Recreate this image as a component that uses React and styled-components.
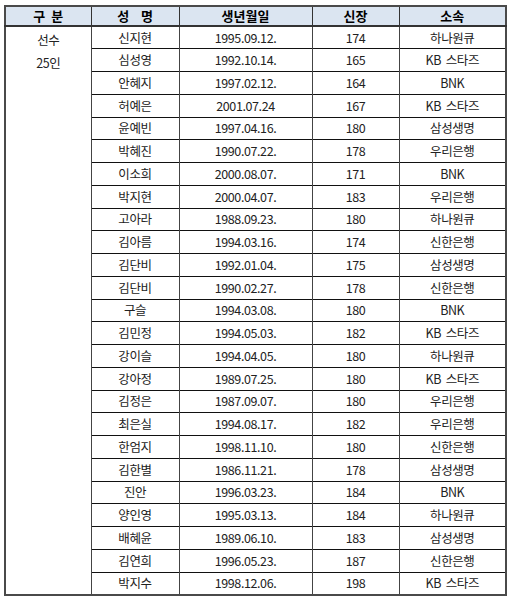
import React from 'react'
import styled, { createGlobalStyle } from 'styled-components'

const players = [
    ['신지현', '1995.09.12.', '174', '하나원큐'],
    ['심성영', '1992.10.14.', '165', 'KB 스타즈'],
    ['안혜지', '1997.02.12.', '164', 'BNK'],
    ['허예은', '2001.07.24', '167', 'KB 스타즈'],
    ['윤예빈', '1997.04.16.', '180', '삼성생명'],
    ['박혜진', '1990.07.22.', '178', '우리은행'],
    ['이소희', '2000.08.07.', '171', 'BNK'],
    ['박지현', '2000.04.07.', '183', '우리은행'],
    ['고아라', '1988.09.23.', '180', '하나원큐'],
    ['김아름', '1994.03.16.', '174', '신한은행'],
    ['김단비', '1992.01.04.', '175', '삼성생명'],
    ['김단비', '1990.02.27.', '178', '신한은행'],
    ['구슬', '1994.03.08.', '180', 'BNK'],
    ['김민정', '1994.05.03.', '182', 'KB 스타즈'],
    ['강이슬', '1994.04.05.', '180', '하나원큐'],
    ['강아정', '1989.07.25.', '180', 'KB 스타즈'],
    ['김정은', '1987.09.07.', '180', '우리은행'],
    ['최은실', '1994.08.17.', '182', '우리은행'],
    ['한엄지', '1998.11.10.', '180', '신한은행'],
    ['김한별', '1986.11.21.', '178', '삼성생명'],
    ['진안', '1996.03.23.', '184', 'BNK'],
    ['양인영', '1995.03.13.', '184', '하나원큐'],
    ['배혜윤', '1989.06.10.', '183', '삼성생명'],
    ['김연희', '1996.05.23.', '187', '신한은행'],
    ['박지수', '1998.12.06.', '198', 'KB 스타즈'],
]

const App = () => {
    return (
        <>
            <GlobalStyle />
            <Page>
                <Table>
                    <colgroup>
                        <col style={{ width: '86px' }} />
                        <col style={{ width: '88px' }} />
                        <col style={{ width: '133px' }} />
                        <col style={{ width: '87px' }} />
                        <col style={{ width: '107px' }} />
                    </colgroup>
                    <thead>
                        <tr>
                            <HeadCell>구&nbsp;&nbsp;분</HeadCell>
                            <HeadCell>성&nbsp;&nbsp;&nbsp;&nbsp;명</HeadCell>
                            <HeadCell>생년월일</HeadCell>
                            <HeadCell>신장</HeadCell>
                            <HeadCell>소속</HeadCell>
                        </tr>
                    </thead>
                    <tbody>
                        {players.map((p, i) => (
                            <Row key={i}>
                                {i === 0 && (
                                    <GroupCell rowSpan={players.length}>
                                        선수<br />25인
                                    </GroupCell>
                                )}
                                <Cell>{p[0]}</Cell>
                                <Cell>{p[1]}</Cell>
                                <Cell>{p[2]}</Cell>
                                <Cell>{p[3].replace(' ', '\u00a0\u00a0')}</Cell>
                            </Row>
                        ))}
                    </tbody>
                </Table>
            </Page>
        </>
    )
}

export default App

const GlobalStyle = createGlobalStyle`
    body {
        margin: 0;
        background: #fff;
        font-family: "Noto Sans CJK KR", "Noto Sans", sans-serif;
    }
`

const Page = styled.div`
    padding: 5px 0 0 4px;
`

const Table = styled.table`
    border-collapse: collapse;
    table-layout: fixed;
    width: 502px;
    border: 2px solid #4a4a4a;
    font-size: 12.5px;
    letter-spacing: -0.4px;
    color: #222;
`

const HeadCell = styled.th`
    background: #dbe5f1;
    height: 18px;
    padding: 0;
    font-size: 13px;
    font-weight: 700;
    letter-spacing: 0;
    line-height: 18px;
    text-align: center;
    color: #000;
    border-right: 1px solid #333;
    border-bottom: 2px solid #333;
    white-space: pre;
`

const Row = styled.tr`
    height: 22.76px;
`

const Cell = styled.td`
    padding: 0;
    text-align: center;
    line-height: 20px;
    border-top: 1px solid #111;
    border-left: 1px solid #444;
    border-right: 1px solid #444;
`

const GroupCell = styled.td`
    padding: 2px 0 0;
    vertical-align: top;
    text-align: center;
    line-height: 22.7px;
    border-right: 1px solid #444;
`
